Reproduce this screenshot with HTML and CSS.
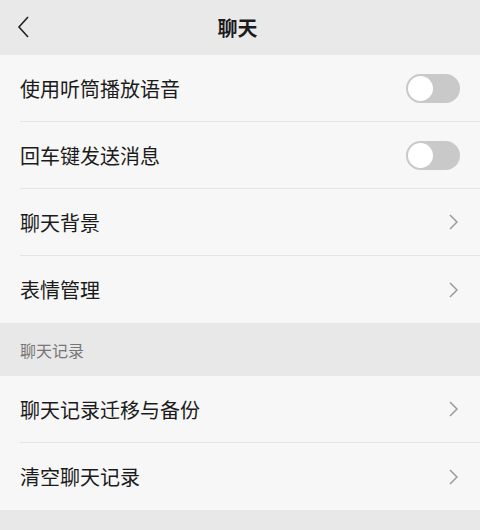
FILE: index.html
```html
<!DOCTYPE html>
<html lang="zh-CN">
<head>
    <meta charset="UTF-8">
    <meta name="viewport" content="width=device-width, initial-scale=1.0">
    <title>聊天</title>
    <link rel="stylesheet" href="styles.css">
</head>
<body>
    <div class="topbar">
        <span class="back">
            <svg width="14" height="22" viewBox="0 0 14 22"><path d="M12 1 L3 11 L12 21" fill="none" stroke="#222" stroke-width="1.6"/></svg>
        </span>
        <h1 class="title">聊天</h1>
    </div>

    <div class="group">
        <div class="row">
            <span class="label">使用听筒播放语音</span>
            <span class="switch"><span class="knob"></span></span>
        </div>
        <div class="row">
            <span class="label">回车键发送消息</span>
            <span class="switch"><span class="knob"></span></span>
        </div>
        <div class="row">
            <span class="label">聊天背景</span>
            <svg class="arrow" width="9" height="16" viewBox="0 0 9 16"><path d="M1 1 L8 8 L1 15" fill="none" stroke="#9a9a9a" stroke-width="1.5"/></svg>
        </div>
        <div class="row">
            <span class="label">表情管理</span>
            <svg class="arrow" width="9" height="16" viewBox="0 0 9 16"><path d="M1 1 L8 8 L1 15" fill="none" stroke="#9a9a9a" stroke-width="1.5"/></svg>
        </div>
    </div>

    <div class="section-title">聊天记录</div>

    <div class="group">
        <div class="row">
            <span class="label">聊天记录迁移与备份</span>
            <svg class="arrow" width="9" height="16" viewBox="0 0 9 16"><path d="M1 1 L8 8 L1 15" fill="none" stroke="#9a9a9a" stroke-width="1.5"/></svg>
        </div>
        <div class="row">
            <span class="label">清空聊天记录</span>
            <svg class="arrow" width="9" height="16" viewBox="0 0 9 16"><path d="M1 1 L8 8 L1 15" fill="none" stroke="#9a9a9a" stroke-width="1.5"/></svg>
        </div>
    </div>
</body>
</html>
```

FILE: styles.css
```css
body {
    margin: 0;
    background: #e8e8e8;
    font-family: "Noto Sans CJK SC", "Noto Sans", sans-serif;
    color: #1b1b1b;
}

.topbar {
    height: 55px;
    display: flex;
    align-items: center;
    justify-content: center;
    position: relative;
    background: #e9e9e9;
    padding-right: 5px;
}

.back {
    position: absolute;
    left: 16px;
    top: 16px;
}

.title {
    margin: 0;
    font-size: 20px;
    font-weight: bold;
}

.group {
    background: #f7f7f7;
}

.row {
    height: 67px;
    display: flex;
    align-items: center;
    justify-content: space-between;
    margin-left: 20px;
    padding-right: 20px;
    border-bottom: 1px solid #e4e4e4;
    box-sizing: border-box;
}

.row:last-child {
    border-bottom: none;
}

.label {
    font-size: 20px;
}

.switch {
    width: 54px;
    height: 29px;
    border-radius: 15px;
    background: #c9c9c9;
    display: flex;
    align-items: center;
}

.knob {
    width: 25px;
    height: 25px;
    border-radius: 50%;
    background: #fff;
    margin-left: 2px;
}

.arrow {
    margin-right: 2px;
}

.section-title {
    height: 53px;
    display: flex;
    align-items: center;
    padding-left: 20px;
    font-size: 16px;
    color: #777;
    background: #e8e8e8;
}
```
